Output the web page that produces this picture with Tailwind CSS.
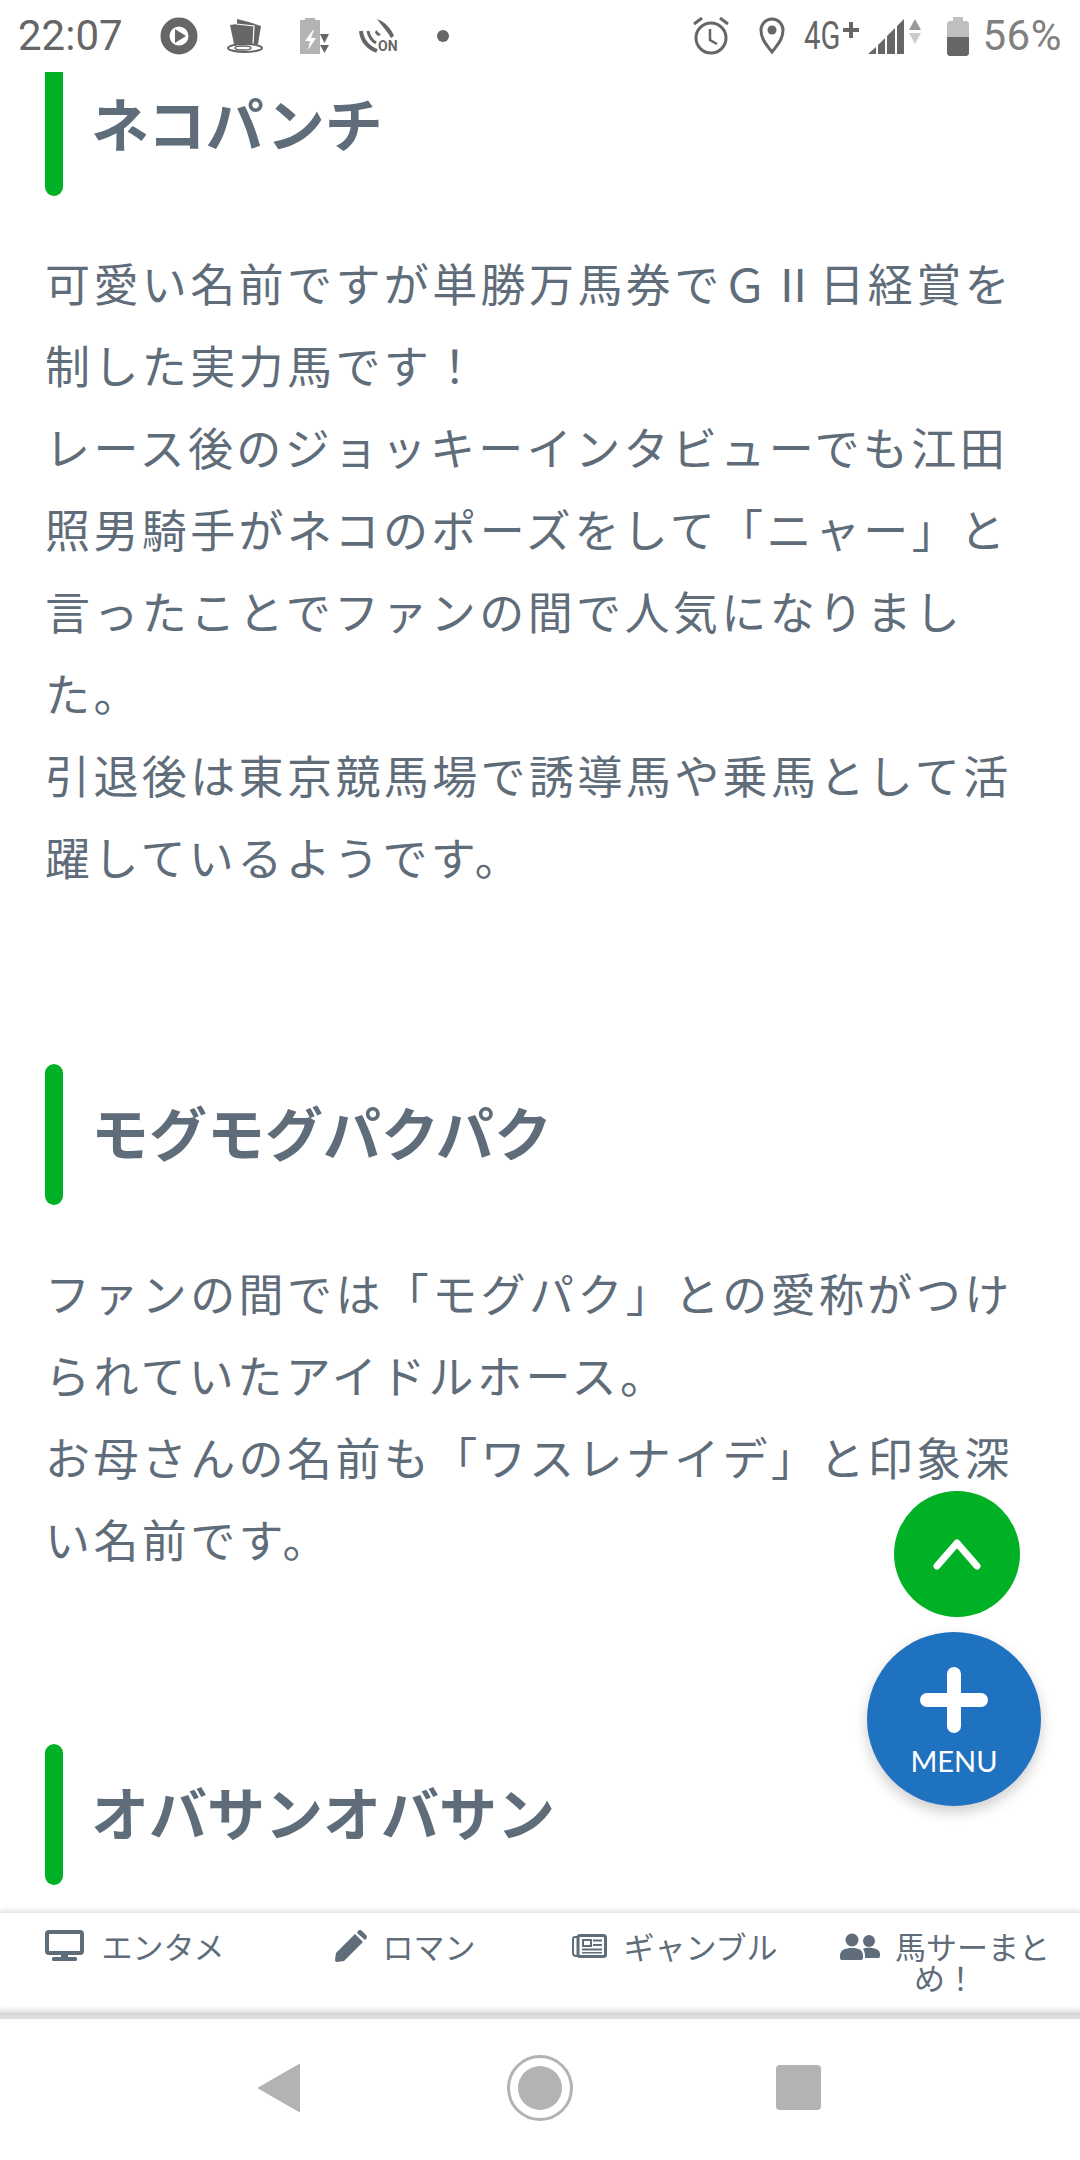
<!DOCTYPE html>
<html lang="ja">
<head>
    <meta charset="UTF-8">
    <script src="https://cdn.jsdelivr.net/npm/@tailwindcss/browser@4"></script>
    <title>ネコパンチ</title>
</head>
<body class="bg-white">
<div class="relative w-[1080px] h-[2160px] overflow-hidden flex flex-col bg-white font-['Noto_Sans_CJK_JP','Noto_Sans',sans-serif]">

    <!-- status bar -->
    <div class="h-[72px] shrink-0 flex items-center justify-between pl-[18px] pr-[18px] text-[#666666] bg-white z-10">
        <div class="flex items-center">
            <span class="text-[42px] font-['Roboto'] w-[106px] leading-none">22:07</span>
            <svg class="w-[40px] h-[40px] ml-[35px]" viewBox="0 0 40 40"><circle cx="20" cy="20" r="14" fill="none" stroke="#666" stroke-width="9"/><path d="M16 13l11 7-11 7z" fill="#666"/></svg>
            <svg class="w-[36px] h-[34px] ml-[28px]" viewBox="0 0 36 34"><path d="M3 6l7-1V0l12 3 12 4-3 18H7z" fill="#666"/><path d="M9 5l18 2-1 18" fill="none" stroke="#fff" stroke-width="1.200"/><ellipse cx="18" cy="29" rx="17" ry="4" fill="none" stroke="#666" stroke-width="2"/><ellipse cx="16" cy="29" rx="8" ry="2" fill="none" stroke="#666" stroke-width="1.500"/></svg>
            <svg class="w-[29px] h-[36px] ml-[37px]" viewBox="0 0 29 36"><path d="M5 0h10v2h5v34H0V2h5z" fill="#b3b3b3"/><path d="M13 12L5 23h5l-2 9 8-12h-5l3-8z" fill="#fff"/><path d="M20 16h9l-4.500 9zM20 27h9l-4.500 8z" fill="#666"/></svg>
            <svg class="w-[44px] h-[44px] ml-[30px]" viewBox="0 0 44 44"><g transform="translate(0 4)"><path d="M2 13c1 10 6 16 16 20" fill="none" stroke="#666" stroke-width="4"/><path d="M9 13c1 6 3 9 8 12" fill="none" stroke="#666" stroke-width="3"/><path d="M18 1c8 3 14 9 17 17l-3 2C28 13 23 8 18 1z" fill="#666"/><path d="M17 12l5 5-3 1-3-3z" fill="#666"/><text x="19" y="33" font-size="14" font-weight="700" fill="#666" font-family="Roboto">ON</text></g></svg>
            <div class="w-[12px] h-[12px] rounded-full bg-[#666666] ml-[34px]"></div>
        </div>
        <div class="flex items-center">
            <svg class="w-[36px] h-[38px]" viewBox="0 0 36 38"><circle cx="18" cy="21" r="15" fill="none" stroke="#666" stroke-width="3"/><path d="M17 12v11l7 4" fill="none" stroke="#666" stroke-width="2.500"/><path d="M1 7l8-6M35 7l-8-6" stroke="#666" stroke-width="3"/></svg>
            <svg class="w-[26px] h-[38px] ml-[30px]" viewBox="0 0 26 38"><path d="M13 35C7 27 2 22 2 13a11 11 0 0 1 22 0c0 9-5 14-11 22z" fill="none" stroke="#666" stroke-width="3"/><circle cx="13" cy="13" r="4.500" fill="#666"/></svg>
            <span class="ml-[19px] w-[39px] text-[39px] font-['Roboto'] leading-none scale-x-[0.75] origin-left whitespace-nowrap">4G</span>
            <svg class="w-[16px] h-[16px] -mt-[12px]" viewBox="0 0 16 16"><path d="M6 0h4v6h6v4h-6v6H6v-6H0V6h6z" fill="#666"/></svg>
            <svg class="w-[53px] h-[36px] ml-[9px]" viewBox="0 0 53 36"><path d="M0 36l8-7v7zM10 27l7-7v16h-7zM19 18l8-8v26h-8zM29 8l7-7v35h-7z" fill="#666"/><path d="M41 12l6-11 6 11z" fill="#999"/><path d="M41 15h12l-6 11z" fill="#ccc"/></svg>
            <svg class="w-[22px] h-[39px] ml-[26px]" viewBox="0 0 22 39"><path d="M6 0h10v4h4l2 2v15H0V6l2-2h4z" fill="#bfbfbf"/><path d="M0 20h22v17l-2 2H2l-2-2z" fill="#666"/></svg>
            <span class="text-[42px] font-['Roboto'] text-[#808080] leading-none ml-[14px] tracking-[0.5px]">56%</span>
        </div>
    </div>

    <!-- article -->
    <div class="flex-1 min-h-0 overflow-hidden pl-[45px] pr-[46px] text-[#5f6d7a]">
        <h2 class="-mt-[17px] flex items-center text-[58px] font-bold leading-none">
            <span class="w-[18px] h-[141px] rounded-[9px] bg-[#00b025]"></span>
            <span class="ml-[28px] pb-[8px]">ネコパンチ</span>
        </h2>
        <p class="mt-[46px] text-[45px] leading-[82px] tracking-[3.4px]">可愛い名前ですが単勝万馬券でＧⅡ日経賞を制した実力馬です！<br>レース後のジョッキーインタビューでも江田照男騎手がネコのポーズをして「ニャー」と言ったことでファンの間で人気になりました。<br>引退後は東京競馬場で誘導馬や乗馬として活躍しているようです。</p>
        <h2 class="mt-[166px] flex items-center text-[58px] font-bold leading-none">
            <span class="w-[18px] h-[141px] rounded-[9px] bg-[#00b025]"></span>
            <span class="ml-[28px] pb-[8px]">モグモグパクパク</span>
        </h2>
        <p class="mt-[47px] text-[45px] leading-[82px] tracking-[3.4px]">ファンの間では「モグパク」との愛称がつけられていたアイドルホース。<br>お母さんの名前も「ワスレナイデ」と印象深い名前です。</p>
        <h2 class="mt-[164px] flex items-center text-[58px] font-bold leading-none">
            <span class="w-[18px] h-[141px] rounded-[9px] bg-[#00b025]"></span>
            <span class="ml-[28px] pb-[8px]">オバサンオバサン</span>
        </h2>
    </div>

    <!-- footer nav -->
    <div class="h-[95px] shrink-0 grid grid-cols-4 pt-[17px] border-t border-[#e5e5e5] bg-white text-[#5f6d7a] text-[31px] leading-[31px] shadow-[0_-2px_4px_rgba(0,0,0,0.1)] z-10">
        <div class="text-center px-[18px]">
            <svg class="inline-block align-top w-[39px] h-[31px] mr-[17px]" viewBox="0 0 39 31"><rect x="2" y="2" width="35" height="21" rx="2" fill="none" stroke="#5f6d7a" stroke-width="4"/><path d="M16 24h7v3h-7z" fill="#5f6d7a"/><rect x="7" y="27" width="25" height="4" rx="1.500" fill="#5f6d7a"/></svg>エンタメ
        </div>
        <div class="text-center px-[18px]">
            <svg class="inline-block align-top w-[32px] h-[32px] mr-[16px]" viewBox="0 0 32 32"><path d="M0 30l1-7L20 4l8 8L9 31l-7 1a2 2 0 0 1-2-2zM22 3l1-2a3 3 0 0 1 4 0l4 4a3 3 0 0 1 0 4l-1 1z" fill="#5f6d7a"/></svg>ロマン
        </div>
        <div class="text-center px-[18px]">
            <svg class="inline-block align-top w-[35px] h-[24px] mt-[4px] mr-[16px]" viewBox="0 0 35 24"><rect x="6" y="1.500" width="27.500" height="21" rx="2" fill="none" stroke="#5f6d7a" stroke-width="3"/><path d="M6 3H3a2 2 0 0 0-2 2v14a3 3 0 0 0 3 3h2" fill="none" stroke="#5f6d7a" stroke-width="2"/><rect x="11" y="6" width="8" height="6" fill="none" stroke="#5f6d7a" stroke-width="2"/><path d="M21 5.500h9v2h-9zM21 10h9v2h-9zM10 14.500h20v2H10zM10 18h20v1.500H10z" fill="#5f6d7a"/></svg>ギャンブル
        </div>
        <div class="text-center px-[18px]">
            <svg class="inline-block align-top w-[40px] h-[28px] mt-[3px] mr-[15px]" viewBox="0 0 40 28"><circle cx="12" cy="7" r="6.500" fill="#5f6d7a"/><circle cx="29" cy="8" r="6" fill="#5f6d7a"/><path d="M0 25v-2c0-6 5-8 12-8s11 2 11 8v2a2 2 0 0 1-2 2H2a2 2 0 0 1-2-2zM25 15c8-1 15 1 15 6v2a2 2 0 0 1-2 2H25v-2c0-3-1-6-2-7z" fill="#5f6d7a"/></svg>馬サーまとめ！
        </div>
    </div>
    <div class="h-[8px] shrink-0 bg-linear-to-b from-white to-[#d0d0d0]"></div>
    <div class="h-[4px] shrink-0 bg-[#dddddd]"></div>

    <!-- android nav -->
    <div class="h-[141px] shrink-0 bg-white flex items-center pl-[258px] pb-[4px]">
        <svg class="w-[42px] h-[48px]" viewBox="0 0 42 48"><path d="M41 1v46L1 24z" fill="#b3b3b3" stroke="#b3b3b3" stroke-linejoin="round" stroke-width="2"/></svg>
        <div class="w-[66px] h-[66px] ml-[207px] rounded-full border-[3px] border-[#b3b3b3] flex items-center justify-center"><div class="w-[44px] h-[44px] rounded-full bg-[#b3b3b3]"></div></div>
        <div class="w-[45px] h-[45px] ml-[203px] rounded-[4px] bg-[#b3b3b3]"></div>
    </div>

    <!-- floating buttons -->
    <div class="absolute left-[894px] top-[1491px] w-[126px] h-[126px] rounded-full bg-[#00b025] flex items-center justify-center">
        <svg class="w-[48px] h-[34px]" viewBox="0 0 48 34"><path d="M4 29L24 6l20 23" fill="none" stroke="#fff" stroke-width="7" stroke-linecap="round" stroke-linejoin="round"/></svg>
    </div>
    <div class="absolute left-[867px] top-[1632px] w-[174px] h-[174px] rounded-full bg-[#1f72bf] shadow-[0_6px_14px_rgba(0,0,0,0.2)] flex flex-col items-center text-white">
        <svg class="w-[68px] h-[66px] mt-[35px]" viewBox="0 0 68 66"><path d="M34 7v52M7 33h54" fill="none" stroke="#fff" stroke-width="14" stroke-linecap="round"/></svg>
        <span class="text-[29px] leading-none mt-[13px] font-['Lato']">MENU</span>
    </div>
</div>
</body>
</html>
